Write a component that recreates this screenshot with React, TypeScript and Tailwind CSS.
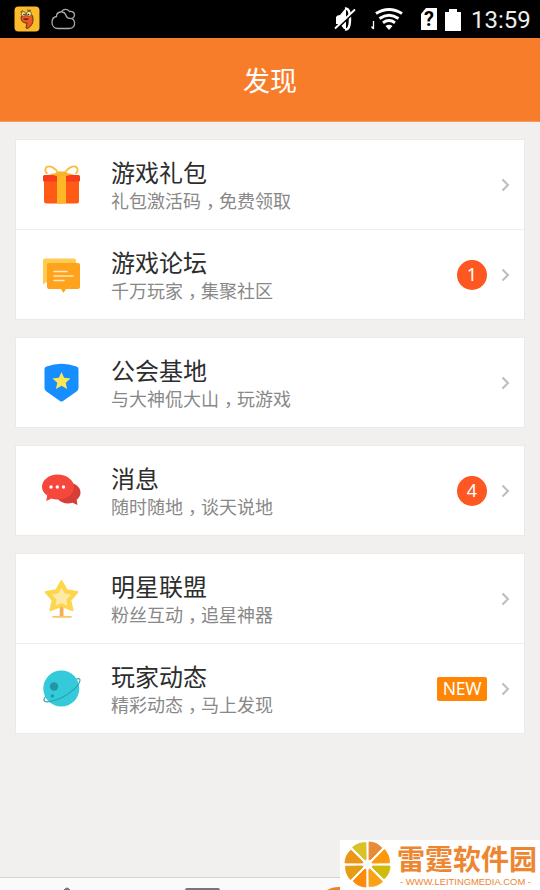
import type { ReactNode } from 'react';

const GiftIcon = () => (
  <svg width="40" height="40" viewBox="0 0 40 40">
    <path d="M2 15h35v21a2.500 2.500 0 0 1-2.500 2.500h-30A2.500 2.500 0 0 1 2 36z" fill="#ff5a16" />
    <path d="M2.500 10h34a1.500 1.500 0 0 1 1.500 1.500V15.500a1 1 0 0 1-1 1H2a1 1 0 0 1-1-1V11.500A1.500 1.500 0 0 1 2.500 10z" fill="#f83c1e" />
    <path d="M15 8h9v30.500h-9z" fill="#feb726" />
    <path d="M16.500 8.500C14 3 8 .5 5 1.800 2.500 3.500 3 7 5.500 8.700M22.500 8.500C25 3 31 .5 34 1.800 36.500 3.500 36 7 33.500 8.700" fill="none" stroke="#f9bd3f" strokeWidth="1.900" />
    <path d="M15 11q-4-1-9.500-2 6.500.5 11-2.500h6q4.500 3 11 2.500-5.500 1-9.500 2z" fill="#f9b32b" />
  </svg>
);

const ForumIcon = () => (
  <svg width="40" height="40" viewBox="0 0 40 40">
    <path d="M3 3.500h29a2 2 0 0 1 2 2v22H3.500L1 29.500v-24a2 2 0 0 1 2-2z" fill="#ffcb51" />
    <path d="M7 8h29a2 2 0 0 1 2 2v22a2 2 0 0 1-2 2H24l-2.500 4-2.500-4H7a2 2 0 0 1-2-2V10a2 2 0 0 1 2-2z" fill="#ffa31c" />
    <path d="M12 16.500h13M12 21h19M12 25.500h10" stroke="#ffe8ba" strokeWidth="1.400" strokeLinecap="round" />
  </svg>
);

const ShieldIcon = () => (
  <svg width="40" height="40" viewBox="0 0 40 40">
    <path d="M4.500 3.500Q19.500-2 34.500 3.500q2 .7 2 2.500V25q0 2-2 3.500L21 38q-1.500 1-3 0L4.500 28.500q-2-1.500-2-3.500V6q0-1.800 2-2.500z" fill="#168eff" />
    <path d="m19.500 9 2.600 5.800 6.400.7-4.800 4.200 1.400 6.200-5.600-3.200-5.600 3.200 1.400-6.200-4.800-4.200 6.400-.7z" fill="#fce753" />
  </svg>
);

const ChatIcon = () => (
  <svg width="40" height="40" viewBox="0 0 40 40">
    <path d="M30 12c5 1.500 8.500 5 8.500 9.500 0 3-1.500 5.500-3.800 7.200L35.500 34l-5-2.200C25 33.500 19 32 16 28z" fill="#d73e36" />
    <path d="M15.500 3.500C24.500 3.500 32 9 32 16s-7 12.500-16 12.500c-2.500 0-4.500-.4-6.500-1.100L4.300 30l.9-5.500C2 22.500 0 19.600 0 16 0 9 7 3.500 15.500 3.500z" fill="#f5473c" />
    <g fill="#fff"><circle cx="9" cy="16" r="1.700" /><circle cx="15.300" cy="16" r="1.700" /><circle cx="21.500" cy="16" r="1.700" /></g>
  </svg>
);

const StarIcon = () => (
  <svg width="40" height="40" viewBox="0 0 40 40">
    <path d="M17.700 27h3.800v11h-3.800z" fill="#f8ad59" />
    <path d="M11 37.800h18" stroke="#fbc65f" strokeWidth="1.800" strokeLinecap="round" />
    <path d="m19.500 2 5.200 9.200 10.600 1.800-7 8.300 2.200 10-11-4.500-11 4.500 2.200-10-7-8.300 10.600-1.800z" fill="#fed64c" stroke="#fed64c" strokeWidth="2" strokeLinejoin="round" />
    <path d="m19.500 9 3 5.300 6.500 1.400-4.500 4.800.8 6.200-5.800-2.700-5.800 2.700.8-6.200-4.500-4.800 6.500-1.400z" fill="#feeaa8" />
  </svg>
);

const PlanetIcon = () => (
  <svg width="40" height="40" viewBox="0 0 40 40">
    <circle cx="19.300" cy="19.500" r="18" fill="#35cad9" />
    <circle cx="12" cy="17.500" r="4.200" fill="#2495a4" />
    <circle cx="10.300" cy="27" r="1.700" fill="#2495a4" />
    <path d="M34.500 10.200C36.500 9.300 38 9.500 38 11c0 4.500-8 12-17 17C11.500 33 3 34 2 31.500c-.4-1 .3-2.300 1.500-3.800" fill="none" stroke="#2aa0ad" strokeWidth="1.100" />
  </svg>
);

type Item = { title: string; before: string; after: string; icon: ReactNode; count?: string; fresh?: boolean };

const groups: Item[][] = [
  [
    { title: '游戏礼包', before: '礼包激活码', after: '免费领取', icon: <GiftIcon /> },
    { title: '游戏论坛', before: '千万玩家', after: '集聚社区', icon: <ForumIcon />, count: '1' },
  ],
  [{ title: '公会基地', before: '与大神侃大山', after: '玩游戏', icon: <ShieldIcon /> }],
  [{ title: '消息', before: '随时随地', after: '谈天说地', icon: <ChatIcon />, count: '4' }],
  [
    { title: '明星联盟', before: '粉丝互动', after: '追星神器', icon: <StarIcon /> },
    { title: '玩家动态', before: '精彩动态', after: '马上发现', icon: <PlanetIcon />, fresh: true },
  ],
];

function Row({ item }: { item: Item }) {
  return (
    <div className="box-content flex h-[89px] items-center pl-[26px] pr-[14px]">
      <div className="w-10 shrink-0">{item.icon}</div>
      <div className="ml-[29px] flex-1 whitespace-nowrap">
        <div className="h-8 text-[24px] leading-8 text-[#2d2d2d]">{item.title}</div>
        <div className="flex h-[26px] text-[18px] leading-6 text-[#888]">
          <span>{item.before}</span>
          <span className="ml-[5px] mr-1 w-[9px] [font-feature-settings:'halt']">，</span>
          <span>{item.after}</span>
        </div>
      </div>
      {item.count && (
        <div className="mr-[14px] flex size-[30px] items-center justify-center rounded-full bg-[#fd5722] font-['Noto_Sans'] text-[18px] text-white">
          {item.count}
        </div>
      )}
      {item.fresh && (
        <div className="mr-[14px] flex h-6 w-[50px] items-center justify-center rounded-[2px] bg-[#ff8505] font-['Noto_Sans'] text-[17.5px] tracking-[-0.3px] text-white">
          NEW
        </div>
      )}
      <svg width="9" height="14" viewBox="0 0 9 14" fill="none" stroke="#bdbdbd" strokeWidth="2">
        <path d="m1.500 1.500 5.500 5.500-5.500 5.500" />
      </svg>
    </div>
  );
}

function StatusBar() {
  return (
    <div className="flex h-[38px] items-center bg-black pl-[14px] pr-[9px]">
      <svg width="26" height="26" viewBox="0 0 26 26">
        <rect x=".5" y=".5" width="25" height="25" rx="4" fill="#fdbb2c" />
        <path d="M7.500 10C10 7.500 17 6.500 18.500 10c1.500 4.500 0 10-5 12.500l-1.500-.5 1-5c-4 .5-7-3-5.500-7z" fill="#ee5720" stroke="#593617" strokeWidth="1" />
        <path d="M9 12.500q3 3 6 0-2 0-6 0" fill="#501a0c" />
        <g fill="#ffe391" stroke="#59502a" strokeWidth=".8"><circle cx="9.500" cy="8" r="2.300" /><circle cx="15" cy="7.800" r="2.500" /></g>
        <path d="M6.500 6 9 4.500M13 4l4 .500" stroke="#59502a" />
        <circle cx="10" cy="8.500" r=".8" fill="#222" /><circle cx="14.500" cy="8.500" r=".8" fill="#222" />
      </svg>
      <svg className="ml-[11px]" width="25" height="22" viewBox="0 0 25 22" fill="none" stroke="#aaa" strokeWidth="1.300">
        <path d="M7 20.500h11c4.500 0 6-3 5.500-6-.3-2.500-1.500-4.300-4.500-4.200-1.800.2-3.500-1-4.200-3.300C13 2.500 5.500 3 5.500 8.500 2.500 9 1 11.500 1 14.500c0 3.500 2.500 6 6 6z" />
        <path d="M10.500 4C12 .5 17 .5 18.500 3.500c3-.5 5 1 5 3.300 0 1.700-.5 2.600-2 3.600" />
      </svg>
      <svg className="ml-auto" width="22" height="24" viewBox="0 0 22 24">
        <path d="M2 10q1-2 4-2l5-6h1v20h-2l-4-5H2z" fill="#fff" />
        <path d="M11 1.500q5-1 5 10.500t-5 10.500" fill="none" stroke="#fff" strokeWidth="2.400" />
        <path d="m0 24.500 20-19" stroke="#000" strokeWidth="2" />
        <path d="M1 21.500 21 2.500" stroke="#fff" strokeWidth="1.900" />
      </svg>
      <svg className="ml-[14px]" width="34" height="24" viewBox="0 0 34 24" fill="none" stroke="#fff">
        <path d="M3.500 14v8M1.500 19.500l2 2.500" strokeWidth="1.300" />
        <path d="M6 6.500q13-8 26 0" strokeWidth="3.200" />
        <path d="M9.500 11.500q9.500-6.500 19 0M13 15.700q6-4.200 12 0" strokeWidth="2.900" />
        <path d="M15.500 19q3.500-2.300 7 0L19 23z" fill="#fff" stroke="none" />
      </svg>
      <div className="ml-[17px] flex h-[22px] w-4 items-center justify-center bg-white font-['Roboto'] text-[20px] font-bold text-black [clip-path:polygon(5px_0,100%_0,100%_100%,0_100%,0_6px)]">?</div>
      <svg className="ml-2" width="16" height="23" viewBox="0 0 16 23"><path d="M0 4h4V1h8v3h4v19H0z" fill="#fff" /></svg>
      <div className="ml-[10px] w-[60px] whitespace-nowrap pt-0.5 font-['Roboto'] text-[24px] leading-[36px] text-[#eee]">13:59</div>
    </div>
  );
}

const slices = ['#e98a34', '#fc980b', '#d2ba0d', '#f9a217', '#fb8b08', '#e69c13', '#ec9617', '#d9c126'];

function Watermark() {
  return (
    <div className="absolute bottom-0 right-0 flex h-[50px] w-[200px] bg-white pl-[3px]">
      <svg className="shrink-0" width="49" height="49" viewBox="-24.500 -24.500 49 49">
        {slices.map((color, i) => (
          <path key={color} d="M1.600-4.800V-22.500Q9-22.300 14.300-16.600L3-5z" fill={color} stroke={color} strokeWidth="1" strokeLinejoin="round" transform={`rotate(${i * 45})`} />
        ))}
      </svg>
      <div className="ml-[5px] whitespace-nowrap text-[#ed8630]">
        <div className="mt-[3px] h-[31px] text-[28px] font-bold leading-[30px]">雷霆软件园</div>
        <svg className="ml-[2px] block overflow-visible" width="138" height="12">
          <text x="1" y="10.500" textLength="131" lengthAdjust="spacingAndGlyphs" fill="#ed8630" fontFamily="Liberation Sans, sans-serif" fontSize="9.800">- WWW.LEITINGMEDIA.COM -</text>
        </svg>
      </div>
    </div>
  );
}

export default function App() {
  return (
    <div className="relative flex h-[890px] w-[540px] flex-col overflow-hidden bg-[#f2f0ee] font-['Noto_Sans_CJK_SC',sans-serif]">
      <StatusBar />
      <header className="flex h-[84px] items-center justify-center border-b border-[#f79b5c] bg-[#f77d2b] pt-[2px] text-[27px] text-white">发现</header>
      <main className="flex flex-1 flex-col gap-[17px] px-[15px] pt-[17px]">
        {groups.map((items) => (
          <section key={items[0].title} className="divide-y divide-[#eee] border border-[#ebeae9] bg-white">
            {items.map((item) => <Row key={item.title} item={item} />)}
          </section>
        ))}
      </main>
      <nav className="flex h-[13px] items-end border-t border-[#d4d4d4] bg-[#fafafa] pl-[62px]">
        <svg width="10" height="3" viewBox="0 0 10 3"><path d="M2 3q3-4 6 0" fill="#777" stroke="#777" /></svg>
        <div className="ml-[113px] h-[2px] w-[35px] rounded-t-sm bg-[#777]" />
        <svg className="ml-[107px]" width="28" height="3" viewBox="0 0 28 3"><path d="M0 3Q5 0 12 0h16v3z" fill="#e58628" /></svg>
      </nav>
      <Watermark />
    </div>
  );
}
